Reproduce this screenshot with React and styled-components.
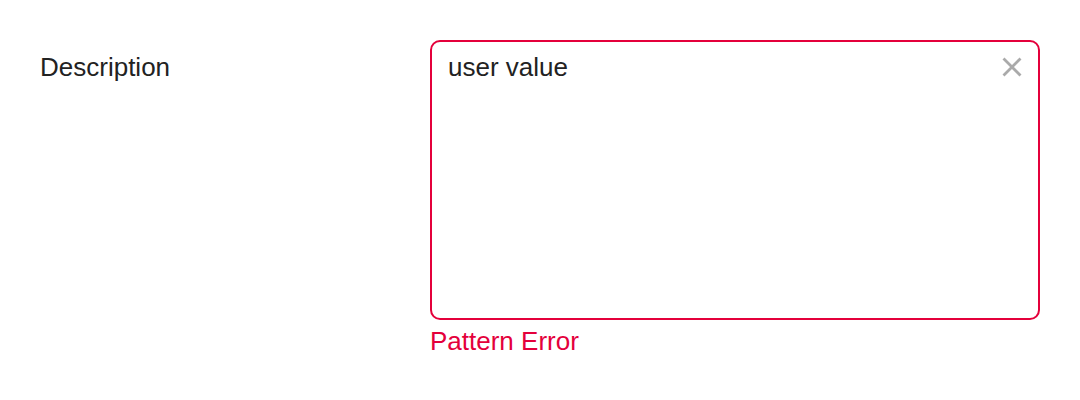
import React, { useState } from 'react';
import styled, { createGlobalStyle } from 'styled-components';

const colors = {
  text: '#222222',
  error: '#e4003b',
  icon: '#aaaaaa',
  white: '#ffffff'
};

const GlobalStyle = createGlobalStyle`
  body {
    margin: 0;
    background: ${colors.white};
    font-family: 'Liberation Sans', Arial, sans-serif;
  }
`;

const Form = styled.div`
  padding: 40px;
  display: grid;
  grid-template-columns: 390px 610px;
`;

const Label = styled.label`
  padding-top: 12px;
  font-size: 26px;
  color: ${colors.text};
`;

const Field = styled.div`
  display: flex;
  flex-direction: column;
`;

const InputWrap = styled.div`
  position: relative;
`;

const TextArea = styled.textarea`
  display: block;
  box-sizing: border-box;
  width: 100%;
  height: 280px;
  margin: 0;
  padding: 10px 56px 12px 16px;
  border: 2px solid ${props => (props.invalid ? colors.error : '#cccccc')};
  border-radius: 10px;
  outline: none;
  resize: none;
  font-family: 'Liberation Sans', Arial, sans-serif;
  font-size: 26px;
  line-height: normal;
  color: ${colors.text};
  background: ${colors.white};
`;

const ClearButton = styled.button`
  position: absolute;
  top: 15px;
  right: 16px;
  width: 24px;
  height: 24px;
  padding: 0;
  border: 0;
  background: none;
  cursor: pointer;
  display: flex;
`;

const ErrorText = styled.div`
  margin-top: 6px;
  font-size: 26px;
  color: ${colors.error};
`;

const App = () => {
  const [value, setValue] = useState('user value');
  return (
    <>
      <GlobalStyle />
      <Form>
        <Label htmlFor="description">Description</Label>
        <Field>
          <InputWrap>
            <TextArea
              id="description"
              invalid
              value={value}
              onChange={e => setValue(e.target.value)}
            />
            <ClearButton onClick={() => setValue('')} aria-label="Clear">
              <svg width="24" height="24" viewBox="0 0 24 24">
                <path
                  d="M3.5 3.5 L20.5 20.5 M20.5 3.5 L3.5 20.5"
                  stroke={colors.icon}
                  strokeWidth="2.8"
                  fill="none"
                />
              </svg>
            </ClearButton>
          </InputWrap>
          <ErrorText>Pattern Error</ErrorText>
        </Field>
      </Form>
    </>
  );
};

export default App;
